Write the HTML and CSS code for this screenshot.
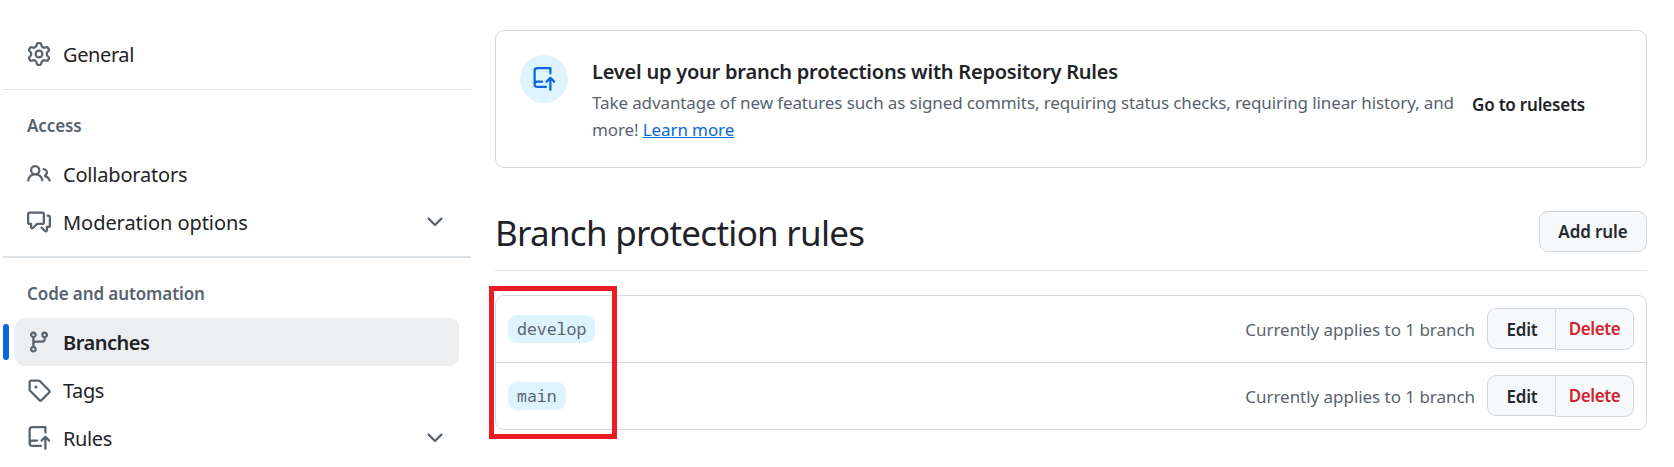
FILE: index.html
```html
<!DOCTYPE html>
<html lang="en">
<head>
<meta charset="utf-8">
<title>Branch protection rules</title>
<link rel="stylesheet" href="styles.css">
</head>
<body>
<svg class="sprite" width="0" height="0" aria-hidden="true">
  <symbol id="chevron" viewBox="0 0 16 16"><path d="M12.78 5.22a.749.749 0 0 1 0 1.06l-4.25 4.25a.749.749 0 0 1-1.06 0L3.22 6.28a.749.749 0 1 1 1.06-1.06L8 8.939l3.72-3.719a.749.749 0 0 1 1.06 0Z"/></symbol>
  <symbol id="repo-push" viewBox="0 0 16 16"><path d="M1 2.5A2.5 2.5 0 0 1 3.5 0h8.75a.75.75 0 0 1 .75.75v3.5a.75.75 0 0 1-1.5 0V1.5h-8a1 1 0 0 0-1 1v6.708A2.493 2.493 0 0 1 3.5 9h3.25a.75.75 0 0 1 0 1.5H3.500a1 1 0 0 0 0 2h5.75a.75.75 0 0 1 0 1.5H3.500A2.5 2.5 0 0 1 1 11.500Zm13.23 7.790-.001-.001-1.224-1.224v6.184a.75.75 0 0 1-1.500 0V9.066L10.280 10.291a.75.75 0 0 1-1.060-1.061l2.505-2.504a.75.75 0 0 1 1.060 0L15.290 9.230a.751.751 0 0 1-.018 1.042.751.751 0 0 1-1.042.018Z"/></symbol>
</svg>
<div class="layout">
  <nav class="sidebar">
    <a class="item"><svg class="icon" viewBox="0 0 16 16"><path d="M8 0a8.2 8.2 0 0 1 .701.031C9.444.095 9.990.645 10.160 1.290l.288 1.107c.018.066.079.158.212.224.231.114.454.243.668.386.123.082.233.090.299.071l1.103-.303c.644-.176 1.392.021 1.820.630.270.385.506.792.704 1.218.315.675.111 1.422-.364 1.891l-.814.806c-.049.048-.098.147-.088.294.016.257.016.515 0 .772-.010.147.038.246.088.294l.814.806c.475.469.679 1.216.364 1.891a7.977 7.977 0 0 1-.704 1.217c-.428.610-1.176.807-1.820.630l-1.102-.302c-.067-.019-.177-.011-.300.071a5.909 5.909 0 0 1-.668.386c-.133.066-.194.158-.211.224l-.290 1.106c-.168.646-.715 1.196-1.458 1.260a8.006 8.006 0 0 1-1.402 0c-.743-.064-1.289-.614-1.458-1.260l-.289-1.106c-.018-.066-.079-.158-.212-.224a5.738 5.738 0 0 1-.668-.386c-.123-.082-.233-.090-.299-.071l-1.103.303c-.644.176-1.392-.021-1.820-.630a8.120 8.120 0 0 1-.704-1.218c-.315-.675-.111-1.422.363-1.891l.815-.806c.050-.048.098-.147.088-.294a6.214 6.214 0 0 1 0-.772c.010-.147-.038-.246-.088-.294l-.815-.806C.635 6.045.431 5.298.746 4.623a7.920 7.920 0 0 1 .704-1.217c.428-.610 1.176-.807 1.820-.630l1.102.302c.067.019.177.011.300-.071.214-.143.437-.272.668-.386.133-.066.194-.158.211-.224l.290-1.106C6.009.645 6.556.095 7.299.030 7.530.010 7.764 0 8 0Zm-.571 1.525c-.036.003-.108.036-.137.146l-.289 1.105c-.147.561-.549.967-.998 1.189-.173.086-.340.183-.500.290-.417.278-.970.423-1.529.270l-1.103-.303c-.109-.030-.175.016-.195.045-.220.312-.412.644-.573.990-.014.031-.021.110.059.190l.815.806c.411.406.562.957.530 1.456a4.709 4.709 0 0 0 0 .582c.032.499-.119 1.050-.530 1.456l-.815.806c-.081.080-.073.159-.059.190.162.346.353.677.573.989.020.030.085.076.195.046l1.102-.303c.560-.153 1.113-.008 1.530.270.161.107.328.204.501.290.447.222.850.629.997 1.189l.289 1.105c.029.109.101.143.137.146a6.600 6.600 0 0 0 1.142 0c.036-.003.108-.036.137-.146l.289-1.105c.147-.561.549-.967.998-1.189.173-.086.340-.183.500-.290.417-.278.970-.423 1.529-.270l1.103.303c.109.029.175-.016.195-.045.220-.313.411-.644.573-.990.014-.031.021-.110-.059-.190l-.815-.806c-.411-.406-.562-.957-.530-1.456a4.709 4.709 0 0 0 0-.582c-.032-.499.119-1.050.530-1.456l.815-.806c.081-.080.073-.159.059-.190a6.464 6.464 0 0 0-.573-.989c-.020-.030-.085-.076-.195-.046l-1.102.303c-.560.153-1.113.008-1.530-.270a4.440 4.440 0 0 0-.501-.290c-.447-.222-.850-.629-.997-1.189l-.289-1.105c-.029-.110-.101-.143-.137-.146a6.600 6.600 0 0 0-1.142 0ZM11 8a3 3 0 1 1-6 0 3 3 0 0 1 6 0ZM9.500 8a1.500 1.500 0 1 0-3.001.001A1.500 1.500 0 0 0 9.500 8Z"/></svg><span>General</span></a>
    <h3 class="group">Access</h3>
    <a class="item"><svg class="icon" viewBox="0 0 16 16"><path d="M2 5.5a3.5 3.5 0 1 1 5.898 2.549 5.508 5.508 0 0 1 3.034 4.084.75.75 0 1 1-1.482.235 4 4 0 0 0-7.900 0 .75.75 0 0 1-1.482-.236A5.507 5.507 0 0 1 3.102 8.050 3.493 3.493 0 0 1 2 5.500ZM11 4a3.001 3.001 0 0 1 2.220 5.018 5.010 5.010 0 0 1 2.560 3.012.749.749 0 0 1-.885.954.752.752 0 0 1-.549-.514 3.507 3.507 0 0 0-2.522-2.372.75.75 0 0 1-.574-.730v-.352a.75.75 0 0 1 .416-.672A1.500 1.500 0 0 0 11 5.500.75.75 0 0 1 11 4Zm-5.500-.500a2 2 0 1 0-.001 3.999A2 2 0 0 0 5.500 3.500Z"/></svg><span class="collab">Collaborators</span></a>
    <a class="item"><svg class="icon" viewBox="0 0 16 16"><path d="M1.750 1h8.500c.966 0 1.750.784 1.750 1.750v5.500A1.750 1.750 0 0 1 10.250 10H7.061l-2.574 2.573A1.458 1.458 0 0 1 2 11.543V10h-.250A1.750 1.750 0 0 1 0 8.250v-5.500C0 1.784.784 1 1.750 1ZM1.500 2.750v5.500c0 .138.112.250.250.250h1a.75.75 0 0 1 .750.750v2.190l2.720-2.720a.749.749 0 0 1 .530-.220h3.500a.250.250 0 0 0 .250-.250v-5.500a.250.250 0 0 0-.250-.250h-8.500a.250.250 0 0 0-.250.250Zm13 2a.250.250 0 0 0-.250-.250h-.500a.75.75 0 0 1 0-1.500h.500c.966 0 1.750.784 1.750 1.750v5.500A1.750 1.750 0 0 1 14.250 12H14v1.543a1.458 1.458 0 0 1-2.487 1.030L9.220 12.280a.749.749 0 0 1 1.060-1.060l2.220 2.220v-2.190a.75.75 0 0 1 .750-.750h1a.250.250 0 0 0 .250-.250Z"/></svg><span class="moderation">Moderation options</span><svg class="icon chevron"><use href="#chevron"/></svg></a>
    <h3 class="group group-thick">Code and automation</h3>
    <a class="item selected"><svg class="icon" viewBox="0 0 16 16"><path d="M9.500 3.250a2.250 2.250 0 1 1 3 2.122V6A2.500 2.500 0 0 1 10 8.500H6a1 1 0 0 0-1 1v1.128a2.251 2.251 0 1 1-1.500 0V5.372a2.250 2.250 0 1 1 1.500 0v1.836A2.493 2.493 0 0 1 6 7h4a1 1 0 0 0 1-1v-.628A2.250 2.250 0 0 1 9.500 3.250Zm-6 0a.75.75 0 1 0 1.500 0 .75.75 0 0 0-1.500 0Zm8.250-.750a.75.75 0 1 0 0 1.500.75.75 0 0 0 0-1.500ZM4.250 12a.75.75 0 1 0 0 1.500.75.75 0 0 0 0-1.500Z"/></svg><span>Branches</span></a>
    <a class="item"><svg class="icon" viewBox="0 0 16 16"><path d="M1 7.775V2.750C1 1.784 1.784 1 2.750 1h5.025c.464 0 .910.184 1.238.513l6.250 6.250a1.750 1.750 0 0 1 0 2.474l-5.026 5.026a1.750 1.750 0 0 1-2.474 0l-6.250-6.250A1.752 1.752 0 0 1 1 7.775Zm1.500 0c0 .066.026.130.073.177l6.250 6.250a.250.250 0 0 0 .354 0l5.025-5.025a.250.250 0 0 0 0-.354l-6.250-6.250a.250.250 0 0 0-.177-.073H2.750a.250.250 0 0 0-.250.250ZM6 5a1 1 0 1 1 0 2 1 1 0 0 1 0-2Z"/></svg><span>Tags</span></a>
    <a class="item"><svg class="icon"><use href="#repo-push"/></svg><span>Rules</span><svg class="icon chevron"><use href="#chevron"/></svg></a>
  </nav>
  <main class="content">
    <section class="notice">
      <div class="badge"><svg class="icon"><use href="#repo-push"/></svg></div>
      <div class="notice-body">
        <h2 class="notice-title">Level up your branch protections with Repository Rules</h2>
        <p class="notice-text">Take advantage of new features such as signed commits, requiring status checks, requiring linear history, and<br>more! <a class="link">Learn more</a></p>
      </div>
      <a class="rulesets">Go to rulesets</a>
    </section>
    <header class="heading">
      <h1 class="title">Branch protection rules</h1>
      <button class="btn add">Add rule</button>
    </header>
    <div class="rules">
      <div class="rule"><code class="branch">develop</code><span class="applies">Currently applies to 1 branch</span><div class="actions"><button class="btn edit">Edit</button><button class="btn delete">Delete</button></div></div>
      <div class="rule"><code class="branch">main</code><span class="applies">Currently applies to 1 branch</span><div class="actions"><button class="btn edit">Edit</button><button class="btn delete">Delete</button></div></div>
      <div class="highlight"></div>
    </div>
  </main>
</div>
</body>
</html>
```
FILE: styles.css
```css
* { box-sizing: border-box; }
body { margin: 0; background: #fff; color: #1f2328; font-family: "Noto Sans", "Open Sans", sans-serif; overflow: hidden; }
h1, h2, h3, p { margin: 0; }
.sprite { display: none; }
.layout { display: flex; gap: 24px; width: 1647px; height: 467px; padding: 30px 0 0 3px; }
.icon { width: 24px; height: 24px; flex: none; fill: #59636e; }

.sidebar { width: 468px; flex: none; }
.item { position: relative; display: flex; align-items: center; height: 48px; margin: 0 12px; padding: 0 12px; gap: 12px; border-radius: 9px; font-size: 20px; letter-spacing: -0.4px; white-space: nowrap; }
.item span { flex: 1; }
.collab { letter-spacing: -0.2px; }
.moderation { letter-spacing: -0.05px; }
.selected { background: #eceeef; font-weight: 600; letter-spacing: -0.5px; }
.selected::before { content: ""; position: absolute; left: -12px; top: 6px; width: 6px; height: 36px; border-radius: 4px; background: #0969da; }
.group { height: 61px; margin-top: 11px; padding: 22px 24px 0; border-top: 1px solid #dfe2e5; color: #59636e; font-size: 17px; line-height: 28px; font-weight: 600; letter-spacing: -0.1px; }
.group-thick { height: 62px; margin-top: 10px; border-top: 2px solid #dce1e5; }

.content { width: 1152px; flex: none; }
.notice { display: flex; height: 138px; padding: 24px; border: 1px solid #d1d9e0; border-radius: 9px; }
.badge { display: flex; align-items: center; justify-content: center; width: 48px; height: 48px; flex: none; border-radius: 50%; background: #ddf4ff; }
.badge .icon { fill: #0969da; }
.notice-body { width: 880px; margin-left: 24px; flex: none; white-space: nowrap; }
.notice-title { height: 33px; font-size: 20px; line-height: 33px; font-weight: 600; letter-spacing: -0.22px; }
.notice-text { padding-top: 1px; color: #59636e; font-size: 17px; line-height: 27px; letter-spacing: -0.11px; }
.link { color: #0969da; text-decoration: underline; }
.rulesets { padding-top: 36px; font-size: 17px; line-height: 27px; font-weight: 600; letter-spacing: -0.2px; white-space: nowrap; }
.heading { display: flex; justify-content: space-between; height: 103px; padding-top: 43px; border-bottom: 1px solid #dce1e5; }
.title { font-size: 35px; line-height: 44px; font-weight: 400; letter-spacing: -0.73px; }
.btn { height: 41px; padding: 0; border: 1px solid #d1d9e0; border-radius: 9px; background: #f6f8fa; color: #25292e; font-family: inherit; font-size: 17px; font-weight: 600; letter-spacing: -0.4px; }
.add { width: 108px; letter-spacing: -0.1px; }

.rules { position: relative; height: 135px; margin-top: 24px; border: 1px solid #d1d9e0; border-radius: 9px; }
.rule { display: flex; align-items: center; height: 66px; padding: 0 12px; }
.rule + .rule { height: 67px; border-top: 1px solid #d1d9e0; }
.branch { height: 28px; padding: 0 9px; border-radius: 9px; background: #ddf4ff; color: #59636e; font-family: "Noto Sans Mono", "DejaVu Sans Mono", monospace; font-size: 16.5px; line-height: 28px; }
.applies { margin-left: auto; color: #59636e; font-size: 17px; letter-spacing: -0.04px; }
.actions { display: flex; align-items: flex-start; margin-left: 12px; }
.edit { width: 69px; padding-top: 2px; border-right: 0; border-radius: 9px 0 0 9px; letter-spacing: -0.2px; }
.delete { width: 79px; height: 42px; margin-left: -1px; padding-bottom: 2px; border-radius: 0 9px 9px 0; color: #d1242f; }
.highlight { position: absolute; left: -7px; top: -10px; width: 128px; height: 153px; border: 5px solid #ed1c24; }
```
